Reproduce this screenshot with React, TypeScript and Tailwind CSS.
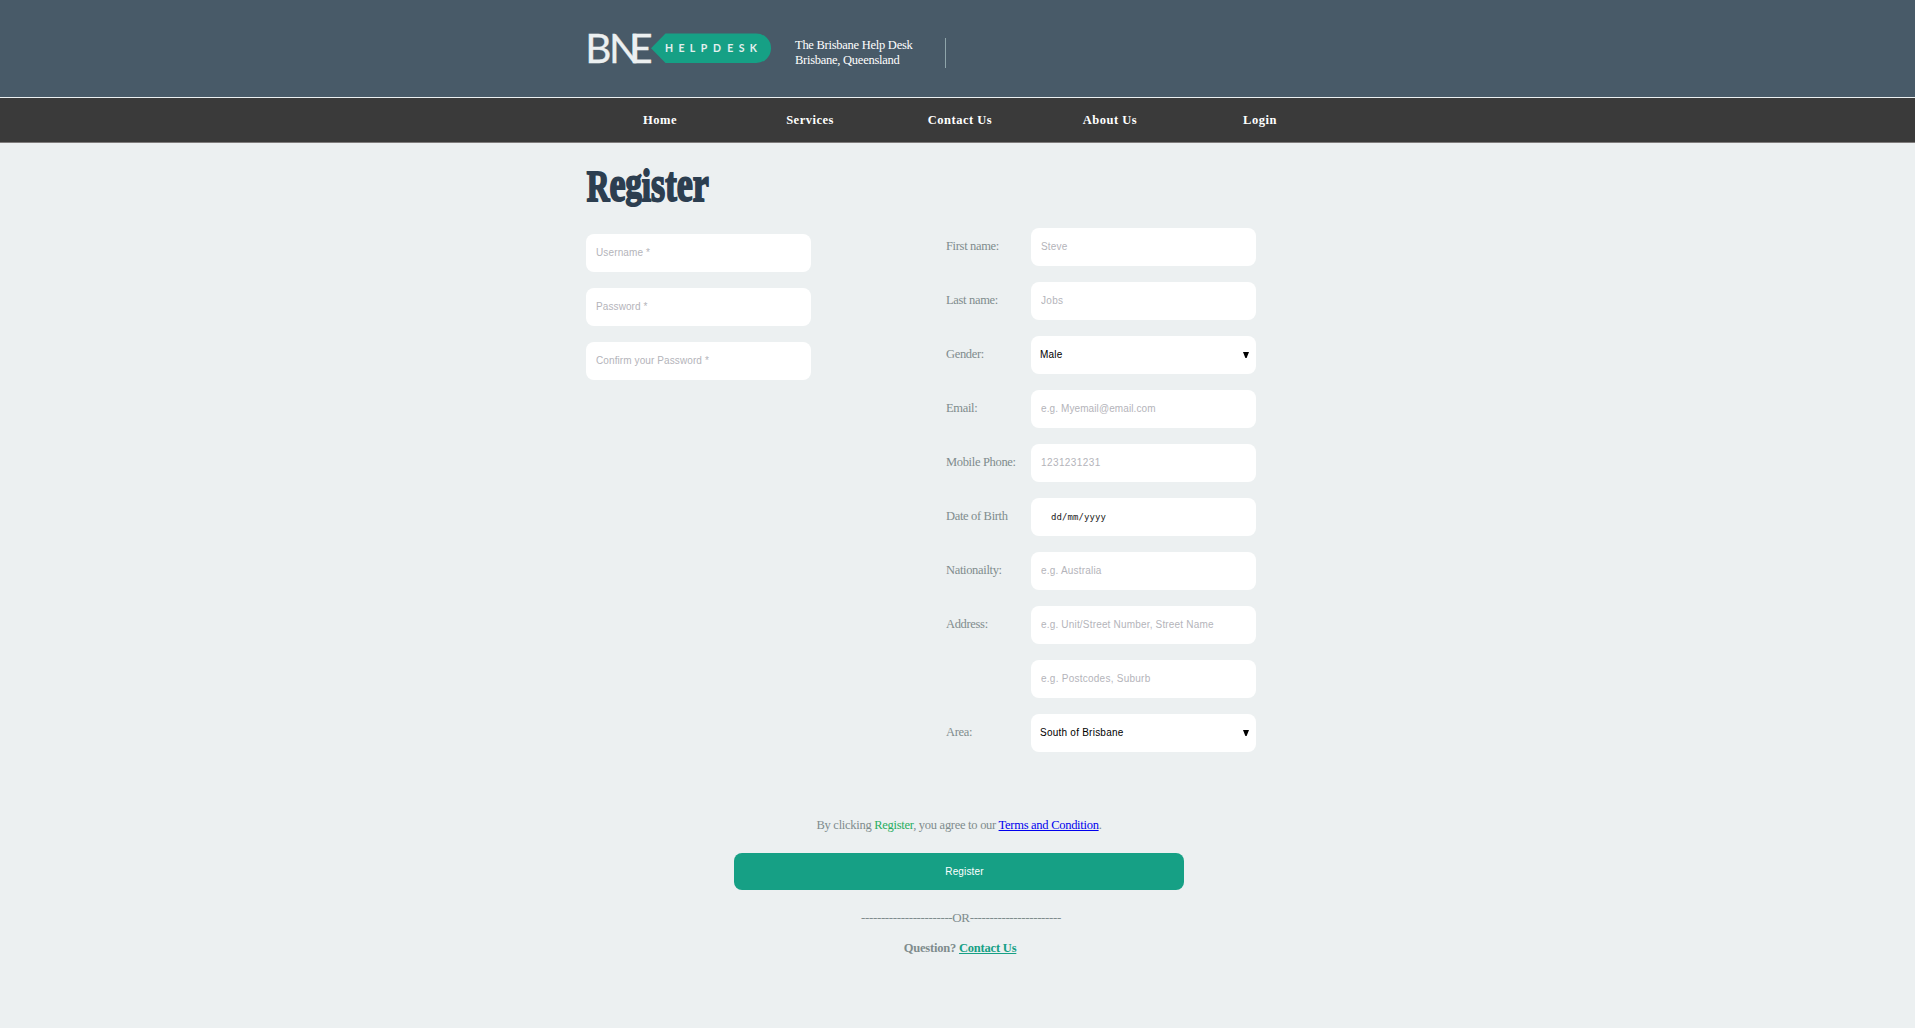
import React from "react";

const serif = "font-['Liberation_Serif','Times_New_Roman',serif]";
const sans = "font-['Liberation_Sans',Arial,sans-serif]";

const navItems = ["Home", "Services", "Contact Us", "About Us", "Login"];

const inputBase =
  "block h-[38px] w-[225px] rounded-lg bg-white px-2.5 pb-[2px] text-[10px] outline-none placeholder:text-[#b4b4ba] placeholder:opacity-100";

function TextInput({ placeholder, tracking = "tracking-[0.13px]" }: { placeholder: string; tracking?: string }) {
  return <input className={`${inputBase} ${sans} ${tracking}`} placeholder={placeholder} />;
}

function SelectBox({ value }: { value: string }) {
  return (
    <button
      type="button"
      className={`flex h-[38px] w-[225px] items-center justify-between rounded-lg bg-white pr-[7px] pb-[2px] pl-[9px] text-[10px] tracking-[0.24px] text-black ${sans}`}
    >
      <span>{value}</span>
      <svg width="6" height="6" viewBox="0 0 6 6" className="mt-px">
        <path d="M0 0H6L3.6 6H2.4Z" fill="#000" />
      </svg>
    </button>
  );
}

function Row({ label, children }: { label?: string; children: React.ReactNode }) {
  return (
    <div className="flex h-[38px]">
      <label className="w-[85px] pt-[11px] text-[12.5px] leading-[15px] tracking-[-0.33px]">{label}</label>
      {children}
    </div>
  );
}

function Logo() {
  return (
    <svg width="184" height="32" viewBox="0 0 184 32" className="block overflow-visible">
      <text x="-2.8 21 41.2" y="31" fill="#ecf0f1" stroke="#ecf0f1" strokeWidth="0.3" fontFamily="Lato, sans-serif" fontSize="40.5">
        BNE
      </text>
      <path d="M63 16.3 77.5 1.5H168.3A14.75 14.75 0 0 1 168.3 31H77.5Z" fill="#16a085" />
      <text
        x="77 90.5 101.7 112.8 125 139.2 150.7 161.7"
        y="20"
        fill="#e4efee"
        fontFamily="Lato, sans-serif"
        fontSize="10.5"
        fontWeight="700"
      >
        HELPDESK
      </text>
    </svg>
  );
}

function Title() {
  return (
    <h1 className="h-[85px] pt-[10px]">
      <svg width="140" height="60" viewBox="0 0 140 60" className="block overflow-visible">
        <text
          x="1"
          y="48.5"
          transform="scale(.745 1)"
          fill="#2c3e50"
          stroke="#2c3e50"
          strokeWidth="2"
          fontFamily="'Liberation Serif', serif"
          fontWeight="700"
          fontSize="50"
          textLength="164"
          lengthAdjust="spacingAndGlyphs"
        >
          <tspan fontSize="43.5">R</tspan>
          <tspan>e</tspan>
          <tspan fontSize="45" dy="-4">g</tspan>
          <tspan fontSize="46" dy="4">i</tspan>
          <tspan>s</tspan>
          <tspan fontSize="48">t</tspan>
          <tspan>er</tspan>
        </text>
      </svg>
    </h1>
  );
}

export default function App() {
  return (
    <div className={`min-h-screen bg-[#ecf0f1] text-[13px] text-[#7f8c8d] ${serif}`}>
      <header className="h-[98px] border-b border-[#ecf0f1] bg-[#485a68]">
        <div className="ml-[588px] flex">
          <div className="mt-8 w-[207px]">
            <Logo />
          </div>
          <p className="mt-[38px] h-[30px] w-[151px] border-r border-[#8fa5aa] text-[12.5px] leading-[15px] tracking-[-0.26px] whitespace-nowrap text-white">
            The Brisbane Help Desk
            <br />
            Brisbane, Queensland
          </p>
        </div>
      </header>

      <nav className="h-[45px] border-b border-[#7f7c7c] bg-[#3a3a3a]">
        <ul className="ml-[585px] flex">
          {navItems.map((item) => (
            <li key={item} className="w-[150px] text-center text-[12.5px] leading-[44px] font-bold tracking-[0.5px] text-white">
              {item}
            </li>
          ))}
        </ul>
      </nav>

      <main className="ml-[586px] w-[750px]">
        <Title />

        <div className="flex">
          <div className="flex w-[360px] flex-col gap-4 pt-1.5">
            <TextInput placeholder="Username *" />
            <TextInput placeholder="Password *" tracking="tracking-[0.1px]" />
            <TextInput placeholder="Confirm your Password *" tracking="tracking-[0.1px]" />
          </div>
          <div className="flex flex-col gap-4">
            <Row label="First name:"><TextInput placeholder="Steve" tracking="tracking-[0.2px]" /></Row>
            <Row label="Last name:"><TextInput placeholder="Jobs" tracking="tracking-[0.3px]" /></Row>
            <Row label="Gender:"><SelectBox value="Male" /></Row>
            <Row label="Email:"><TextInput placeholder="e.g. Myemail@email.com" tracking="tracking-[0.1px]" /></Row>
            <Row label="Mobile Phone:"><TextInput placeholder="1231231231" tracking="tracking-[0.4px]" /></Row>
            <Row label="Date of Birth">
              <div className="flex h-[38px] w-[225px] items-center rounded-lg bg-white pt-px pl-5 font-['DejaVu_Sans_Mono',monospace] text-[9px] tracking-[0.08px] text-[#222]">
                dd/mm/yyyy
              </div>
            </Row>
            <Row label="Nationailty:"><TextInput placeholder="e.g. Australia" tracking="tracking-[0.2px]" /></Row>
            <Row label="Address:"><TextInput placeholder="e.g. Unit/Street Number, Street Name" tracking="tracking-[0.18px]" /></Row>
            <Row><TextInput placeholder="e.g. Postcodes, Suburb" tracking="tracking-[0.25px]" /></Row>
            <Row label="Area:"><SelectBox value="South of Brisbane" /></Row>
          </div>
        </div>

        <div className="ml-[148px] flex w-[450px] flex-col items-center whitespace-nowrap">
          <p className="mt-[65px] text-[12.5px] leading-[16px] tracking-[-0.28px]">
            By clicking <span className="text-[#27ae60]">Register</span>, you agree to our{" "}
            <a href="#" className="text-[#0000ee] underline">Terms and Condition</a>.
          </p>
          <button
            type="button"
            className={`mt-5 h-[37px] w-full rounded-lg bg-[#16a085] pl-[11px] text-[10px] tracking-[0.15px] text-white ${sans}`}
          >
            Register
          </button>
          <p className="mt-5 pl-1 leading-[16px] tracking-[-0.36px]">-----------------------OR-----------------------</p>
          <p className="mt-3.5 pl-0.5 text-[12.5px] leading-[16px] font-bold tracking-[-0.2px]">
            Question? <a href="#" className="text-[#16a085] underline">Contact Us</a>
          </p>
        </div>
      </main>
    </div>
  );
}
